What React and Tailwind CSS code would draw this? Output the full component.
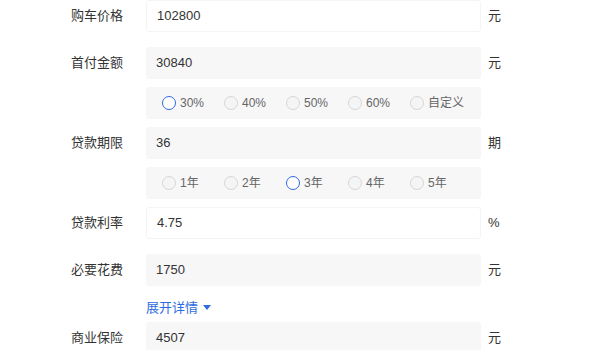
import React, { useState } from "react";

// Simple radio option
function Radio({ label, checked, onClick }) {
  return (
    <button
      type="button"
      onClick={onClick}
      className="flex items-center w-[62px] shrink-0 text-[12px] text-[#666]"
    >
      <span
        className={
          checked
            ? "w-[14px] h-[14px] rounded-full border-[1.5px] border-[#2f6be0] bg-white"
            : "w-[14px] h-[14px] rounded-full border border-[#d6d6d6] bg-[#f5f5f5]"
        }
      />
      <span className="ml-[4px] leading-none">{label}</span>
    </button>
  );
}

function Field({ label, value, unit, white, className = "" }) {
  return (
    <div className={`flex items-center h-[32px] ${className}`}>
      <div className="w-[75px] shrink-0 text-[13px] text-[#333]">{label}</div>
      <div
        className={`w-[335px] h-full flex items-center pl-[10px] text-[13px] text-[#333] rounded-[3px] ${
          white ? "bg-white border border-[#f4f4f4]" : "bg-[#f7f7f8]"
        }`}
      >
        {value}
      </div>
      <div className="ml-[7px] text-[13px] text-[#333]">{unit}</div>
    </div>
  );
}

function RadioRow({ options, selected, onSelect, className = "" }) {
  return (
    <div className={`flex items-center h-[32px] ${className}`}>
      <div className="w-[75px] shrink-0" />
      <div className="w-[335px] h-full flex items-center pl-[16px] bg-[#f7f7f8] rounded-[3px]">
        {options.map((o) => (
          <Radio
            key={o}
            label={o}
            checked={selected === o}
            onClick={() => onSelect(o)}
          />
        ))}
      </div>
    </div>
  );
}

export default function App() {
  const [ratio, setRatio] = useState("30%");
  const [term, setTerm] = useState("3年");

  return (
    <div
      className="w-[600px] h-[350px] overflow-hidden bg-white pl-[71px]"
      style={{ fontFamily: '"Liberation Sans", "Noto Sans CJK SC", sans-serif' }}
    >
      <Field label="购车价格" value="102800" unit="元" white />
      <Field label="首付金额" value="30840" unit="元" className="mt-[15px]" />
      <RadioRow
        options={["30%", "40%", "50%", "60%", "自定义"]}
        selected={ratio}
        onSelect={setRatio}
        className="mt-[8px]"
      />
      <Field label="贷款期限" value="36" unit="期" className="mt-[8px]" />
      <RadioRow
        options={["1年", "2年", "3年", "4年", "5年"]}
        selected={term}
        onSelect={setTerm}
        className="mt-[8px]"
      />
      <Field label="贷款利率" value="4.75" unit="%" white className="mt-[8px]" />
      <Field label="必要花费" value="1750" unit="元" className="mt-[15px]" />
      <div className="flex items-center h-[20px] mt-[12px]">
        <div className="w-[75px] shrink-0" />
        <button type="button" className="flex items-center text-[13px] text-[#2f6be0]">
          展开详情
          <svg width="8" height="6" viewBox="0 0 8 6" className="ml-[5px]">
            <path d="M0 0h8L4 5z" fill="#2f6be0" />
          </svg>
        </button>
      </div>
      <Field label="商业保险" value="4507" unit="元" className="mt-[4px]" />
    </div>
  );
}
